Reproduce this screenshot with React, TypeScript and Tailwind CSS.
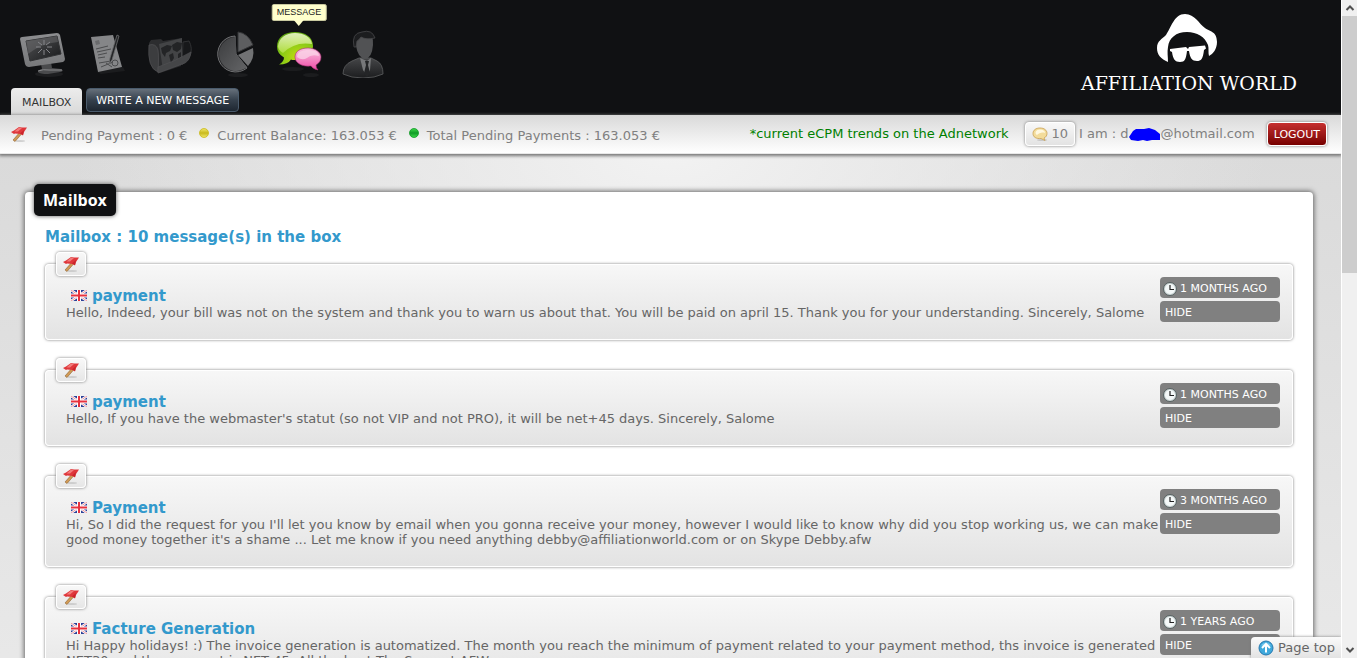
import { useId, type ReactNode } from 'react'

type Message = {
  title: string
  body: string
  age: string
}

const messages: Message[] = [
  {
    title: 'payment',
    body: 'Hello, Indeed, your bill was not on the system and thank you to warn us about that. You will be paid on april 15. Thank you for your understanding. Sincerely, Salome',
    age: '1 months ago',
  },
  {
    title: 'payment',
    body: "Hello, If you have the webmaster's statut (so not VIP and not PRO), it will be net+45 days. Sincerely, Salome",
    age: '1 months ago',
  },
  {
    title: 'Payment',
    body: "Hi, So I did the request for you I'll let you know by email when you gonna receive your money, however I would like to know why did you stop working us, we can make good money together it's a shame ... Let me know if you need anything debby@affiliationworld.com or on Skype Debby.afw",
    age: '3 months ago',
  },
  {
    title: 'Facture Generation',
    body: 'Hi Happy holidays! :) The invoice generation is automatized. The month you reach the minimum of payment related to your payment method, ths invoice is generated NET30 and the payment is NET 45. All the best The Support AFW',
    age: '1 years ago',
  },
]

const MonitorIcon = () => (
  <svg viewBox="0 0 48 48" className="h-12 w-12">
    <defs>
      <linearGradient id="mon-frame" x1="0" y1="0" x2="0" y2="1">
        <stop offset="0" stopColor="#8d8e90" />
        <stop offset="1" stopColor="#77787a" />
      </linearGradient>
      <linearGradient id="mon-screen" x1="0" y1="0" x2="1" y2="1">
        <stop offset="0" stopColor="#555658" />
        <stop offset="1" stopColor="#17181a" />
      </linearGradient>
    </defs>
    <ellipse cx="30" cy="44" rx="14" ry="3" fill="#1d1e20" />
    <path d="M22 34l10-2 1 6 9 1q4 2-1 3l-12 2q-8 0-10-2 0-2 4-3z" fill="#4a4b4d" />
    <path d="M19 41q5-2 11-1l13 0" stroke="#88898b" fill="none" />
    <path d="M1 9q0-2 2-2l35-4q2 0 3 2l5 24q0 2-2 3l-34 5q-3 0-4-3z" fill="url(#mon-frame)" />
    <path d="M7 11l31-5 4 18-31 7z" fill="url(#mon-screen)" stroke="#303133" />
    <path d="M7 11l31-5 1 6q-16 1-30 12z" fill="#6b6c6e" opacity=".5" />
    <g stroke="#85868a" strokeWidth="1">
      <path d="M25 10v5M25 20v5M17 17h5M28 17h5M19 12l4 3M27 19l4 4M31 12l-4 3M19 23l4-4" />
    </g>
  </svg>
)

const DocumentIcon = () => (
  <svg viewBox="0 0 48 48" className="h-12 w-12">
    <path d="M14 42l26-5 2 4-24 3z" fill="#1b1c1e" />
    <path d="M8 7l22-2 9 32-24 5z" fill="#858688" />
    <path d="M12 11l4-1 1 4-4 1z" fill="#696a6c" />
    <g stroke="#4b4c4e" strokeWidth="1" fill="none">
      <path d="M13 19l12-3M14 22l14-3M15 25l9-2M15 28l7-1M16 33l12-2M18 37l12-5M23 33l6 4" />
      <circle cx="32" cy="33" r="3" />
    </g>
    <path d="M34 5l2 1-7 24-3 4 1-6z" fill="#232426" stroke="#6d6e70" strokeWidth=".8" />
  </svg>
)

const FolderIcon = () => (
  <svg viewBox="0 0 48 48" className="h-12 w-12">
    <path d="M36 12l6-1q4 7 1 15l-8 9z" fill="#17181a" stroke="#303133" />
    <path d="M2 13l2-3 10-1 2 2 19-3-1 28-21 7Q0 36 2 13z" fill="#2c2d2f" />
    <path d="M12 14l23-6v26l-19 6z" fill="#434446" />
    <path d="M14 18l6-3 5 1-2 5-4 2-1 4-3-4zM25 15l5-3 5 1-1 6-4 3-4-2zM22 25l4-2 1 5-3 5zM31 24l3-2 0 5-3 2z" fill="#232426" />
    <path d="M2 15q7-2 9 5 1 7 0 22Q0 38 2 15z" fill="#3c3d3f" stroke="#515254" strokeWidth=".7" />
    <path d="M11 37q16-5 33-15-1 8-6 11L11 43z" fill="#454648" stroke="#515254" strokeWidth=".7" />
  </svg>
)

const PieIcon = () => (
  <svg viewBox="0 0 48 48" className="h-12 w-12">
    <defs>
      <linearGradient id="pie" x1="0" y1="0" x2="1" y2="1">
        <stop offset="0" stopColor="#3c3d3f" />
        <stop offset="1" stopColor="#646567" />
      </linearGradient>
    </defs>
    <ellipse cx="27" cy="45" rx="10" ry="2" fill="#1c1d1f" />
    <path d="M24 6A18 18 0 1 0 36 38l-11-14z" fill="#29292b" stroke="#717274" />
    <path d="M25 7A17 17 0 1 0 36 37L25 24z" fill="url(#pie)" />
    <path d="M27 2v20l15-7Q37 3 27 2z" fill="#5d5e60" stroke="#353638" />
    <path d="M27 25l15-7q2 10-5 18z" fill="#717274" />
  </svg>
)

const ChatIcon = () => (
  <svg viewBox="0 0 48 48" className="h-12 w-12">
    <defs>
      <radialGradient id="chat-green" cx=".6" cy=".8" r=".8">
        <stop offset="0" stopColor="#c7dd10" />
        <stop offset=".6" stopColor="#8acb16" />
        <stop offset="1" stopColor="#5fa510" />
      </radialGradient>
      <linearGradient id="chat-shine" x1="0" y1="0" x2="0" y2="1">
        <stop offset="0" stopColor="#f4fbd9" />
        <stop offset="1" stopColor="#b5e045" />
      </linearGradient>
      <linearGradient id="chat-pink" x1="0" y1="0" x2="0" y2="1">
        <stop offset="0" stopColor="#f9c3df" />
        <stop offset="1" stopColor="#f04ca8" />
      </linearGradient>
    </defs>
    <ellipse cx="18" cy="39" rx="11" ry="2" fill="#1b1c1e" />
    <ellipse cx="36" cy="45" rx="8" ry="2" fill="#1b1c1e" />
    <path d="M20 2c10 0 18 5 18 14S30 30 19 30q-2 0-3-.5-3 5-12 5 5-3 5-7-7-4-7-11C2 7 10 2 20 2z" fill="url(#chat-green)" />
    <path d="M20 3c9 0 16 4 17 11q-17-3-29 9-5-3-5-7C4 8 11 3 20 3z" fill="url(#chat-shine)" opacity=".85" />
    <path d="M33 18c7 0 13 4 13 9 0 4-2 6-5 8q0 3 2 5-5-1-7-4c-9 1-16-3-16-9s6-9 13-9z" fill="url(#chat-pink)" stroke="#a52b70" strokeWidth=".6" />
    <path d="M22 27q0-7 11-7t11 6q-8-2-12 2-5 3-10-1z" fill="#fbd5e8" opacity=".75" />
  </svg>
)

const UserIcon = () => (
  <svg viewBox="0 0 48 48" className="h-12 w-12">
    <defs>
      <linearGradient id="suit" x1="0" y1="0" x2="0" y2="1">
        <stop offset="0" stopColor="#454648" />
        <stop offset="1" stopColor="#1c1d1f" />
      </linearGradient>
    </defs>
    <path d="M4 44q0-9 9-13l7-3h12l6 3q6 3 6 13-8 4-20 4T4 44z" fill="url(#suit)" stroke="#5d5e60" strokeWidth=".8" />
    <path d="M21 28l7 3 4-3-1 12-3 6-4-6z" fill="#77787a" />
    <path d="M26 31h4l-1 4 2 8-3 4-3-4 2-8z" fill="#242527" />
    <path d="M17 10q1-6 10-6 8 0 7 11-1 13-8 14-7-1-9-13z" fill="#515254" />
    <path d="M15 17q-3-14 8-15 10-3 13 6-9 2-14-1-3 4-4 4l-1 6z" fill="#1c1d1f" stroke="#47484a" strokeWidth=".8" />
  </svg>
)

const FlagPin = () => (
  <svg viewBox="0 0 16 16" className="h-4 w-4 shrink-0">
    <ellipse cx="9" cy="15" rx="5" ry="1" fill="#bbb" opacity=".6" />
    <path d="M9 6l2 1.500L4 15.500 2 14z" fill="#d19a55" stroke="#7d5223" strokeWidth=".5" />
    <path d="M0 6l3-1.500L8 1l3 .5L16 1.500l-3 4.500-1 3.500L9.500 8 4 7.500 3 8z" fill="#df373b" />
    <path d="M3.500 5.500L8 1.500l3 .5-4 3.500z" fill="#f27c7b" />
    <path d="M9 7.500L13 4l-1 5z" fill="#c9252b" />
  </svg>
)

const UkFlag = () => (
  <svg viewBox="0 0 16 11" className="mb-[2px] h-[11px] w-4 shrink-0" role="img" aria-label="English">
    <path fill="#2b3f97" d="M0 0h16v11H0z" />
    <path d="M0 0l16 11M16 0L0 11" stroke="#fff" strokeWidth="2.400" />
    <path d="M0 0l16 11M16 0L0 11" stroke="#ec7a80" strokeWidth=".8" />
    <path d="M8 0v11M0 5.500h16" stroke="#fff" strokeWidth="4" />
    <path d="M8 0v11M0 5.500h16" stroke="#e8323e" strokeWidth="2" />
  </svg>
)

const ClockIcon = () => (
  <svg viewBox="0 0 14 14" className="h-[14px] w-[14px] shrink-0">
    <circle cx="7" cy="7" r="6.500" fill="#cfd8d8" stroke="#566060" />
    <circle cx="7" cy="7" r="5" fill="#f4f8f8" />
    <path d="M7 3v4.500h4" stroke="#222" strokeWidth="1.200" fill="none" />
  </svg>
)

const BubbleIcon = () => (
  <svg viewBox="0 0 16 16" className="h-4 w-4 shrink-0">
    <ellipse cx="10" cy="14" rx="5" ry="1" fill="#c9c9c9" />
    <path d="M8 2c4 0 7 2 7 5.500 0 2-1 3.500-3 4.500l1 2.500-4-2C4 13 1 11 1 7.500 1 4 4 2 8 2z" fill="#f3dc9b" stroke="#c9a052" strokeWidth=".8" />
    <path d="M8 3.500c3 0 5 1.500 5 3.500-3-1-6 0-8 2-3-2-1-5.500 3-5.500z" fill="#fff8e0" />
  </svg>
)

const UpIcon = () => (
  <svg viewBox="0 0 16 16" className="h-4 w-4 shrink-0">
    <circle cx="8" cy="8" r="7" fill="#3fa9dc" stroke="#2678ae" />
    <path d="M3 5q5-5 10 0-5 3-10 0z" fill="#8fd3f2" opacity=".7" />
    <path d="M4 8l4-4 4 4M8 4.500V12.500" stroke="#fff" strokeWidth="2" fill="none" />
  </svg>
)

const Dot = ({ light, dark }: { light: string; dark: string }) => {
  const id = useId()
  return (
    <svg viewBox="0 0 10 10" className="mb-[2px] h-[10px] w-[10px] shrink-0">
      <defs>
        <linearGradient id={id} x1="0" y1="0" x2="0" y2="1">
          <stop offset="0" stopColor={light} />
          <stop offset=".5" stopColor={dark} />
          <stop offset="1" stopColor={light} />
        </linearGradient>
      </defs>
      <circle cx="5" cy="5" r="4.500" fill={`url(#${id})`} stroke={dark} strokeWidth=".8" />
    </svg>
  )
}

const Logo = () => (
  <a href="#" className="flex w-[214px] flex-col items-center gap-[7px] text-white">
    <svg viewBox="0 0 60 50" className="mr-1 h-[50px] w-[60px]">
      <path
        d="M11 48C4 45 0 41 0 34c0-7 5-9 9-13C14 14 17 0 28 0c10 0 14 10 20 14 5 4 12 3 12 14 0 7-4 12-8 14-1-3 0-8-1-11-3-8-11-13-21-13-11 0-18 6-19 15-1 5 0 10 0 15z"
        fill="currentColor"
      />
      <path
        d="M13 35l16-2 2 2 1-2 16-1.500 1 3-2 1.500c-1 9-3 11-7 11-5 0-7-3-8-10h-2c-1 8-2 11-7 11-5 0-7-3-8-10l-2-1z"
        fill="currentColor"
      />
    </svg>
    <span className="font-['DejaVu_Serif',serif] text-[19px] leading-6 whitespace-nowrap">AFFILIATION WORLD</span>
  </a>
)

const NavItem = ({ label, children, active }: { label: string; children: ReactNode; active?: boolean }) => (
  <li className="relative w-16">
    {active && (
      <span className="absolute -top-[26px] left-1/2 -translate-x-1/2 rounded-[2px] border border-[#c9c9a0] bg-[#ffffcc] px-1 font-['Liberation_Sans',Arial,sans-serif] text-[9px] leading-[15px] text-[#222]">
        MESSAGE
        <span className="absolute top-full left-1/2 -translate-x-1/2 border-x-[5px] border-t-[6px] border-x-transparent border-t-[#ffffcc]" />
      </span>
    )}
    <a href="#" aria-label={label} className="flex justify-center">
      {children}
    </a>
  </li>
)

const Header = () => (
  <header className="flex h-[115px] shrink-0 items-end justify-between bg-[#101113] pr-[45px] pl-[11px]">
    <div>
      <ul className="flex">
        <NavItem label="Dashboard">
          <MonitorIcon />
        </NavItem>
        <NavItem label="Contract">
          <DocumentIcon />
        </NavItem>
        <NavItem label="Campaigns">
          <FolderIcon />
        </NavItem>
        <NavItem label="Statistics">
          <PieIcon />
        </NavItem>
        <NavItem label="Message" active>
          <ChatIcon />
        </NavItem>
        <NavItem label="Profile">
          <UserIcon />
        </NavItem>
      </ul>
      <nav className="mt-[10px] flex items-start gap-1 text-[11px] leading-4">
        <a href="#" className="h-[27px] rounded-t-[4px] bg-linear-to-b from-[#ececec] to-[#d9d9d9] px-[11px] pt-[7px] text-[#333]">
          MAILBOX
        </a>
        <a
          href="#"
          className="rounded-[4px] border border-[#4a5b6c] bg-linear-to-b from-[#66707b] via-[#36414d] via-50% to-[#1e2731] px-[9px] pt-1 pb-[2px] text-white"
        >
          WRITE A NEW MESSAGE
        </a>
      </nav>
    </div>
    <div className="self-start pt-[14px]">
      <Logo />
    </div>
  </header>
)

const StatusBar = () => (
  <div className="relative z-10 flex h-[39px] shrink-0 items-center justify-between border-b border-[#e8e8e8] bg-linear-to-b from-[#d9d9d9] to-white pr-[14px] pl-[11px] text-[#808080] shadow-[0_1px_3px_1px_#777]">
    <ul className="flex items-center">
      <li className="flex items-center gap-[14px]">
        <FlagPin />
        <span className="pt-1">Pending Payment : 0 €</span>
      </li>
      <li className="ml-3 flex items-center gap-2">
        <Dot light="#f3ea6c" dark="#c9b91c" />
        <span className="pt-1">Current Balance: 163.053 €</span>
      </li>
      <li className="ml-3 flex items-center gap-2">
        <Dot light="#3fdc4b" dark="#109a26" />
        <span className="pt-1">Total Pending Payments : 163.053 €</span>
      </li>
    </ul>
    <div className="flex items-center">
      <p className="mr-4 text-[#008000]">*current eCPM trends on the Adnetwork</p>
      <a
        href="#"
        className="mr-1 flex h-6 items-center gap-1 rounded-[4px] border border-white bg-linear-to-b from-[#f8f8f8] to-[#e3e3e3] px-[6px] shadow-[0_0_3px_#777]"
      >
        <BubbleIcon />
        10
      </a>
      <span className="flex items-center whitespace-pre">
        I am : d
        <svg viewBox="0 0 32 13" className="h-[13px] w-8">
          <path d="M2 12L0 9l4-6 3-2 8 0 5-1 6 2 5 4v6l-8 0-5 1-4-1-5 1z" fill="#0000fe" />
        </svg>
        @hotmail.com
      </span>
      <button
        type="button"
        className="ml-3 h-6 rounded-[4px] border border-white bg-linear-to-b from-[#c62f2f] to-[#770000] px-[6px] pt-[2px] text-[11px] text-white shadow-[0_0_3px_#777]"
      >
        LOGOUT
      </button>
    </div>
  </div>
)

const MessageCard = ({ message }: { message: Message }) => (
  <article className="relative flex rounded-[4px] border border-white bg-linear-to-b from-[#f7f7f7] to-[#e3e3e3] pt-3 pr-3 pb-[19px] pl-5 shadow-[0_0_3px_#777]">
    <span className="absolute -top-[13px] left-[10px] flex h-6 w-[30px] items-center justify-center rounded-[4px] border border-white bg-linear-to-b from-[#f8f8f8] to-[#e6e6e6] shadow-[0_0_3px_#777]">
      <FlagPin />
    </span>
    <div className="min-w-0 flex-1 pt-[10px]">
      <h3 className="flex items-center gap-[5px] pl-[5px] text-[15px] leading-[18px] font-bold text-[#3399cc]">
        <UkFlag />
        {message.title}
      </h3>
      <p className="leading-[15px] text-[#666]">{message.body}</p>
    </div>
    <div className="-mb-[19px] flex w-[120px] shrink-0 flex-col gap-[3px] text-[11px] leading-[19px] text-white uppercase">
      <span className="flex items-center gap-[3px] rounded-[4px] bg-[#808080] px-[3px] pt-[2px]">
        <ClockIcon />
        {message.age}
      </span>
      <button type="button" className="rounded-[4px] bg-[#808080] px-[5px] pt-[2px] text-left uppercase">
        Hide
      </button>
    </div>
  </article>
)

const Scrollbar = () => (
  <div className="flex w-4 shrink-0 flex-col items-center border-l border-white bg-[#f0f0f0]" aria-hidden="true">
    <svg viewBox="0 0 16 16" className="h-4 w-4">
      <path d="M4.500 10L8 6.500l3.500 3.500" stroke="#505050" strokeWidth="2" fill="none" />
    </svg>
    <div className="h-[39%] w-full bg-[#cdcdcd]" />
    <svg viewBox="0 0 16 16" className="mt-auto h-4 w-4">
      <path d="M4.500 6L8 9.500 11.500 6" stroke="#505050" strokeWidth="2" fill="none" />
    </svg>
  </div>
)

export default function App() {
  return (
    <div className="flex h-screen overflow-hidden font-['DejaVu_Sans',Verdana,sans-serif] text-[13px]">
      <div className="relative flex min-w-0 flex-1 flex-col overflow-hidden bg-[#e6e6e6]">
        <Header />
        <StatusBar />
        <main className="min-h-0 flex-1 bg-[radial-gradient(ellipse_600px_300px_at_50%_0,#f2f2f2,transparent),linear-gradient(#dadada,#e8e8e8_500px)] pt-[38px] pr-7 pl-[25px]">
          <section className="relative rounded-t-[4px] bg-white px-5 pt-9 pb-10 shadow-[0_0_5px_1px_#666]">
            <h1 className="absolute -top-2 left-[9px] rounded-[5px] bg-[#101113] px-[9px] font-['Open_Sans',sans-serif] text-[16px] leading-8 font-bold text-white shadow-[0_0_4px_#555]">
              Mailbox
            </h1>
            <h2 className="text-[15px] leading-[18px] font-bold text-[#3399cc]">Mailbox : 10 message(s) in the box</h2>
            <div className="mt-[18px] flex flex-col gap-[30px]">
              {messages.map((message, i) => (
                <MessageCard key={i} message={message} />
              ))}
            </div>
          </section>
        </main>
        <a
          href="#"
          className="absolute right-0 bottom-0 z-20 flex h-[21px] items-center gap-1 rounded-tl-[4px] bg-linear-to-b from-[#fafafa] to-[#e3e3e3] pr-[6px] pl-[7px] text-[#666] shadow-[0_0_3px_#777]"
        >
          <UpIcon />
          Page top
        </a>
      </div>
      <Scrollbar />
    </div>
  )
}
